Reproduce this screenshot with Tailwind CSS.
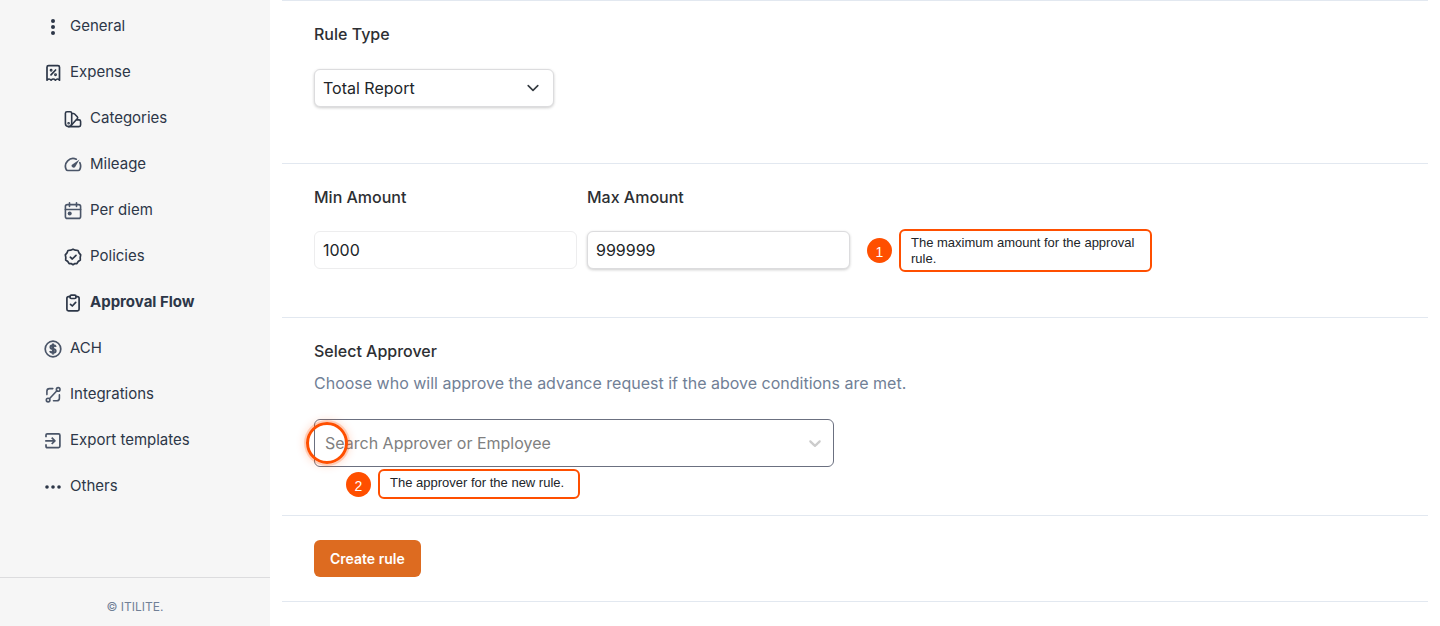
<!DOCTYPE html>
<html lang="en">
<head>
<meta charset="utf-8">
<meta name="viewport" content="width=device-width, initial-scale=1">
<title>Approval Flow</title>
<script src="https://cdn.jsdelivr.net/npm/@tailwindcss/browser@4"></script>
</head>
<body class="flex min-h-screen bg-white font-['Inter',sans-serif] text-[#2d3748]">

<aside class="flex w-[270px] shrink-0 flex-col bg-[#f6f6f6]">
  <nav aria-label="Settings" class="flex flex-1 flex-col pt-[3px] text-[15px]">
    <a href="#general" class="flex h-[46px] items-center gap-2 pl-11">
      <svg class="mt-[2px] size-[18px]" viewBox="0 0 18 18" fill="currentColor" aria-hidden="true"><circle cx="9" cy="3" r="2"/><circle cx="9" cy="9" r="2"/><circle cx="9" cy="15" r="2"/></svg>
      General</a>
    <a href="#expense" class="flex h-[46px] items-center gap-2 pl-11">
      <svg class="mt-[2px] size-[18px]" viewBox="0 0 18 18" fill="none" stroke="currentColor" stroke-width="1.700" stroke-linecap="round" stroke-linejoin="round" aria-hidden="true"><path d="M3 16.200V3.200Q3 1.600 4.600 1.600H13.900Q15.500 1.600 15.500 3.200V16.200Q13.400 13.800 11.400 16.200 9.250 13.800 7.100 16.200 5.100 13.800 3 16.200Z"/><path d="M7 10.800L11.600 6"/><circle cx="7.100" cy="6.200" r=".6"/><circle cx="11.500" cy="10.700" r=".6"/></svg>
      Expense</a>
    <a href="#categories" class="flex h-[46px] items-center gap-2 pl-16">
      <svg class="mt-[2px] size-[18px]" viewBox="0 0 18 18" fill="none" stroke="currentColor" stroke-width="1.600" stroke-linecap="round" stroke-linejoin="round" aria-hidden="true"><path d="M3 1.700H6.100Q7.700 1.700 7.700 3.300V13.600Q7.700 16.600 4.600 16.600 1.400 16.600 1.400 13.600V3.300Q1.400 1.700 3 1.700Z"/><path d="M7.900 3.500H9.300Q10 3.500 10.600 4L13.300 6.700Q14.100 7.600 13.400 8.500L7.300 15.200M12.200 9.900H15Q16.600 9.900 16.600 11.500V15Q16.600 16.600 15 16.600H4.600"/><circle cx="4.600" cy="13.300" r=".5"/></svg>
      Categories</a>
    <a href="#mileage" class="flex h-[46px] items-center gap-2 pl-16">
      <svg class="mt-[2px] size-[18px] text-[#4a5568]" viewBox="0 0 18 18" fill="none" stroke="currentColor" stroke-width="1.700" stroke-linecap="round" stroke-linejoin="round" aria-hidden="true"><path d="M12.300 3.200A7.700 7.700 0 0 0 2.200 13.500Q2.700 14.500 3.800 14.500H14.200Q15.300 14.500 15.800 13.500A7.700 7.700 0 0 0 15.800 6.700"/><path d="M15.500 3.500L11 11.300A2.200 2.200 0 0 1 7.600 8.900Z" fill="currentColor" stroke="none"/></svg>
      Mileage</a>
    <a href="#per-diem" class="flex h-[46px] items-center gap-2 pl-16">
      <svg class="mt-[2px] size-[18px] text-[#4a5568]" viewBox="0 0 18 18" fill="none" stroke="currentColor" stroke-width="1.600" stroke-linecap="round" stroke-linejoin="round" aria-hidden="true"><rect x="1.400" y="2.600" width="15.200" height="13.800" rx="2"/><path d="M1.400 7.500H16.600M5.500 .800V4.500M12.500 .800V4.500"/><circle cx="5.700" cy="11.600" r="2" fill="currentColor" stroke="none"/></svg>
      Per diem</a>
    <a href="#policies" class="flex h-[46px] items-center gap-2 pl-16">
      <svg class="mt-[2px] size-[18px]" viewBox="0 0 18 18" fill="none" stroke="currentColor" stroke-width="1.700" stroke-linecap="round" stroke-linejoin="round" aria-hidden="true"><path d="M9 1.200L11.400 2.200 14 2.500 15 4.900 16.700 6.900 16.200 9.300 16.300 12 14.200 13.500 12.900 15.600 10.500 15.700 9 16.700 7.500 15.700 5.100 15.600 3.800 13.500 1.700 12 1.800 9.300 1.300 6.900 3 4.900 4 2.500 6.600 2.200Z"/><path d="M6.300 9.200L8.300 11 12 7.300"/></svg>
      Policies</a>
    <a href="#approval-flow" aria-current="page" class="flex h-[46px] items-center gap-2 pl-16 font-bold">
      <svg class="mt-[2px] size-[18px]" viewBox="0 0 18 18" fill="none" stroke="currentColor" stroke-width="1.700" stroke-linecap="round" stroke-linejoin="round" aria-hidden="true"><path d="M6 2.600H4.500Q2.900 2.600 2.900 4.200V15.200Q2.900 16.800 4.500 16.800H13.500Q15.100 16.800 15.100 15.200V4.200Q15.100 2.600 13.500 2.600H12"/><rect x="6" y="1.200" width="6" height="3.300" rx="1.200"/><path d="M6.500 10.300L8.300 12 11.700 8.300"/></svg>
      Approval Flow</a>
    <a href="#ach" class="flex h-[46px] items-center gap-2 pl-11">
      <svg class="mt-[2px] size-[18px] text-[#4a5568]" viewBox="0 0 18 18" fill="none" stroke="currentColor" stroke-width="1.700" aria-hidden="true"><circle cx="9" cy="9" r="7.800"/><path stroke-width="2.100" d="M11.800 6.900Q11.300 5.400 9 5.400 6.500 5.400 6.500 7.200 6.500 8.700 9 9 11.600 9.300 11.600 10.900 11.600 12.600 9 12.600 6.500 12.600 6.100 11M9 3.600V14.400"/></svg>
      ACH</a>
    <a href="#integrations" class="flex h-[46px] items-center gap-2 pl-11">
      <svg class="mt-[2px] size-[18px] text-[#4a5568]" viewBox="0 0 18 18" fill="none" stroke="currentColor" stroke-width="1.600" stroke-linecap="round" stroke-linejoin="round" aria-hidden="true"><circle cx="14.200" cy="3.400" r="1.800"/><circle cx="4.100" cy="14.100" r="1.800"/><path d="M12.900 4.800L5.400 12.700M8.800 2.600H5.500Q2.900 2.600 2.900 5.200V8.600M15.400 8.900V12.200Q15.400 14.800 12.800 14.800H9.500"/></svg>
      Integrations</a>
    <a href="#export-templates" class="flex h-[46px] items-center gap-2 pl-11">
      <svg class="mt-[2px] size-[18px] text-[#4a5568]" viewBox="0 0 18 18" fill="none" stroke="currentColor" stroke-width="1.700" stroke-linejoin="round" aria-hidden="true"><path d="M2 5.300V3.100Q2 1.900 3.300 1.900H14.600Q15.900 1.900 15.900 3.200V14.300Q15.900 15.600 14.600 15.600H3.300Q2 15.600 2 14.300V12.300M1.200 8.800H10.600M7.700 5.600L10.900 8.800 7.700 12"/></svg>
      Export templates</a>
    <a href="#others" class="flex h-[46px] items-center gap-2 pl-11">
      <svg class="mt-[2px] size-[18px]" viewBox="0 0 18 18" fill="currentColor" aria-hidden="true"><circle cx="3" cy="9" r="1.800"/><circle cx="9" cy="9" r="1.800"/><circle cx="15" cy="9" r="1.800"/></svg>
      Others</a>
  </nav>
  <footer class="border-t border-[#dcdcde] pt-5 pb-[10px] text-center text-xs leading-[18px] text-[#718096]">© ITILITE.</footer>
</aside>

<main class="min-w-0 flex-1 px-3 text-base text-[#212529]">
  <form>
    <section class="border-t border-[#e2e8f0] px-8 pt-6 pb-14">
      <label for="rule-type" class="block leading-[18px] font-medium text-[#2d2f33]">Rule Type</label>
      <div class="relative mt-[26px] w-[240px]">
        <select id="rule-type" class="block h-[38px] w-full appearance-none rounded-[6px] border border-[#dcdcde] bg-white pl-2 shadow-[0_1px_3px_rgba(0,0,0,0.2)]">
          <option>Total Report</option>
        </select>
        <svg class="pointer-events-none absolute top-[11px] right-[13px] size-4" viewBox="0 0 16 16" fill="none" stroke="#343a40" stroke-width="1.600" stroke-linecap="round" stroke-linejoin="round" aria-hidden="true"><path d="M3.200 5.600L8 10.400 12.800 5.600"/></svg>
      </div>
    </section>

    <section class="relative flex gap-[10px] border-t border-[#e2e8f0] px-8 pt-6 pb-12">
      <div class="w-[263px]">
        <label for="min-amount" class="block leading-[18px] font-medium text-[#2d2f33]">Min Amount</label>
        <input id="min-amount" type="text" inputmode="numeric" value="1000" readonly class="mt-[25px] block h-[38px] w-full rounded-[6px] border border-[#ededee] bg-white px-2">
      </div>
      <div class="w-[263px]">
        <label for="max-amount" class="block leading-[18px] font-medium text-[#2d2f33]">Max Amount</label>
        <input id="max-amount" type="text" inputmode="numeric" value="999999" class="mt-[25px] block h-[38px] w-full rounded-[6px] border border-[#dcdcde] bg-white px-2 shadow-[0_1px_3px_rgba(0,0,0,0.2)]">
      </div>
      <!-- Step 1 callout -->
      <div class="absolute top-[65px] left-[585px] flex items-center gap-[7px] font-['Liberation_Sans',sans-serif] text-[13px] leading-4">
        <span class="flex size-[25px] items-center justify-center rounded-full bg-[#ff4f00] pt-[3px] text-sm text-white">1</span>
        <p class="h-[43px] w-[253px] rounded-[6px] border-2 border-[#ff4f00] bg-white pt-1 pr-2 pl-[10px]">The maximum amount for the approval rule.</p>
      </div>
    </section>

    <section class="border-t border-[#e2e8f0] px-8 pt-6 pb-12">
      <label for="approver" class="block leading-[18px] font-medium text-[#2d2f33]">Select Approver</label>
      <p class="mt-[11px] leading-6 text-[#718096]">Choose who will approve the advance request if the above conditions are met.</p>
      <div class="relative mt-6 max-w-[520px]">
        <input id="approver" type="text" role="combobox" aria-expanded="false" placeholder="Search Approver or Employee" class="block h-12 w-full rounded-[6px] border border-[#6b7080] bg-white pr-10 pl-[10px] placeholder:text-[#808080]">
        <svg class="pointer-events-none absolute top-[14px] right-[9px] size-5" viewBox="0 0 20 20" fill="#cccccc" aria-hidden="true"><path d="M4.516 7.548c.436-.446 1.043-.481 1.576 0L10 11.295l3.908-3.747c.533-.481 1.141-.446 1.574 0 .436.445.408 1.197 0 1.615-.406.418-4.695 4.502-4.695 4.502a1.095 1.095 0 0 1-1.576 0S4.924 9.581 4.516 9.163s-.436-1.170 0-1.615z"/></svg>
        <!-- Highlight ring and step 2 callout -->
        <span class="pointer-events-none absolute top-[3px] left-[-8px] size-[42px] rounded-full border-3 border-[#ff4f00] shadow-[0_0_0_2px_rgba(255,79,0,0.2),0_0_9px_2px_rgba(255,79,0,0.2)]"></span>
        <div class="absolute top-[50px] left-8 flex items-center gap-[7px] font-['Liberation_Sans',sans-serif] text-[13px] leading-4">
          <span class="flex size-[25px] items-center justify-center rounded-full bg-[#ff4f00] pt-[3px] text-sm text-white">2</span>
          <p class="h-[30px] w-[202px] rounded-[6px] border-2 border-[#ff4f00] bg-white pt-1 pl-[10px]">The approver for the new rule.</p>
        </div>
      </div>
    </section>

    <section class="border-y border-[#e2e8f0] px-8 py-6">
      <button type="button" class="block h-[37px] rounded-[6px] bg-[#dd6b20] px-4 text-sm font-semibold text-white">Create rule</button>
    </section>
  </form>
</main>
</body>
</html>
